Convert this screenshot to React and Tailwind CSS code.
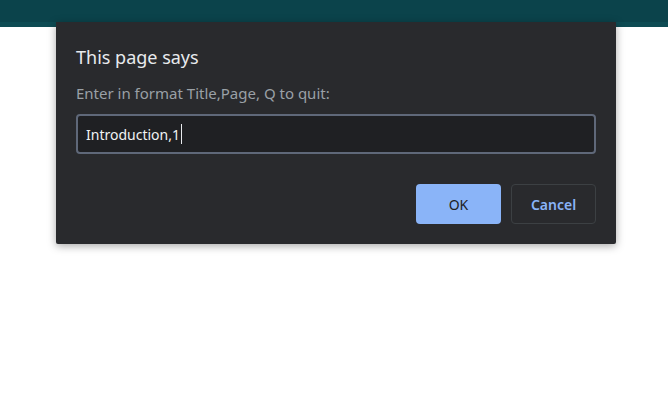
export default function App() {
  return (
    <div className="relative h-[408px] w-[668px] overflow-hidden bg-white font-['Noto_Sans','Open_Sans',sans-serif]">
      <div className="h-[27px] w-full bg-[#0d4b53]">
        <div className="h-[22px] bg-[#0b434b]" />
      </div>

      <div className="absolute left-[56px] top-[22px] w-[560px] rounded-b-[2px] bg-[#292a2d] px-[20px] pb-[20px] pt-[23px] shadow-[0_2px_8px_rgba(0,0,0,0.35)]">
        <p className="text-[18px] leading-[24px] text-[#e8eaed]">This page says</p>
        <p className="mt-[14px] text-[15px] leading-[20px] text-[#9aa0a6]">Enter in format Title,Page, Q to quit:</p>
        <div className="mt-[11px] flex h-[40px] items-center rounded-[4px] border-2 border-[#5f6879] bg-[#1f2023] px-[8px]">
          <span className="text-[14px] text-[#f1f3f4]">Introduction,1</span>
          <span className="ml-[1px] h-[20px] w-px bg-[#e8eaed]" />
        </div>
        <div className="mt-[30px] flex justify-end gap-[10px]">
          <button className="flex h-[40px] w-[85px] items-center justify-center rounded-[4px] bg-[#8ab4f8] text-[14px] text-[#202124]">
            OK
          </button>
          <button className="flex h-[40px] w-[85px] items-center justify-center rounded-[4px] border border-[#3c4043] text-[14px] font-semibold text-[#8ab4f8]">
            Cancel
          </button>
        </div>
      </div>
    </div>
  );
}
